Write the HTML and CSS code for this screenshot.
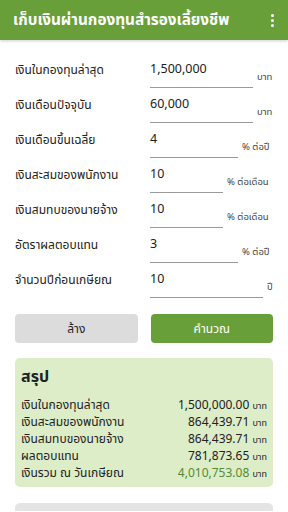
FILE: index.html
```html
<!DOCTYPE html>
<html lang="th">
<head>
  <meta charset="UTF-8">
  <meta name="viewport" content="width=device-width, initial-scale=1.0">
  <title>เก็บเงินผ่านกองทุนสำรองเลี้ยงชีพ</title>
  <link rel="stylesheet" href="styles.css">
</head>
<body>

<header class="appbar">
  <h1>เก็บเงินผ่านกองทุนสำรองเลี้ยงชีพ</h1>
  <span class="menu"><i></i><i></i><i></i></span>
</header>

<main>
  <!-- ฟอร์มกรอกข้อมูล -->
  <div class="form">
    <div class="row">
      <label>เงินในกองทุนล่าสุด</label>
      <div class="field"><span class="val w1">1,500,000</span><span class="unit">บาท</span></div>
    </div>
    <div class="row">
      <label>เงินเดือนปัจจุบัน</label>
      <div class="field"><span class="val w1">60,000</span><span class="unit">บาท</span></div>
    </div>
    <div class="row">
      <label>เงินเดือนขึ้นเฉลี่ย</label>
      <div class="field"><span class="val w2">4</span><span class="unit">% ต่อปี</span></div>
    </div>
    <div class="row">
      <label>เงินสะสมของพนักงาน</label>
      <div class="field"><span class="val w3">10</span><span class="unit">% ต่อเดือน</span></div>
    </div>
    <div class="row">
      <label>เงินสมทบของนายจ้าง</label>
      <div class="field"><span class="val w3">10</span><span class="unit">% ต่อเดือน</span></div>
    </div>
    <div class="row">
      <label>อัตราผลตอบแทน</label>
      <div class="field"><span class="val w2">3</span><span class="unit">% ต่อปี</span></div>
    </div>
    <div class="row">
      <label>จำนวนปีก่อนเกษียณ</label>
      <div class="field"><span class="val w4">10</span><span class="unit">ปี</span></div>
    </div>
  </div>

  <div class="buttons">
    <button class="btn clear">ล้าง</button>
    <button class="btn calc">คำนวณ</button>
  </div>

  <!-- สรุปผล -->
  <div class="summary">
    <h2>สรุป</h2>
    <div class="line"><span>เงินในกองทุนล่าสุด</span><span class="amt">1,500,000.00 <small>บาท</small></span></div>
    <div class="line"><span>เงินสะสมของพนักงาน</span><span class="amt">864,439.71 <small>บาท</small></span></div>
    <div class="line"><span>เงินสมทบของนายจ้าง</span><span class="amt">864,439.71 <small>บาท</small></span></div>
    <div class="line"><span>ผลตอบแทน</span><span class="amt">781,873.65 <small>บาท</small></span></div>
    <div class="line"><span>เงินรวม ณ วันเกษียณ</span><span class="amt"><b>4,010,753.08</b> <small>บาท</small></span></div>
  </div>

  <div class="more"></div>
</main>

</body>
</html>
```

FILE: styles.css
```css
* {
  margin: 0;
  padding: 0;
  box-sizing: border-box;
}
html, body {
  height: 512px;
  overflow: hidden;
}
body {
  font-family: "Noto Sans", "Noto Sans Thai", "Noto Sans Thai UI", sans-serif;
  background-color: #fff;
  color: #222;
  width: 288px;
}
.appbar {
  height: 40px;
  background-color: #689f38;
  display: flex;
  align-items: center;
  justify-content: space-between;
  padding: 0 13px;
  box-shadow: 0 1px 3px rgba(0,0,0,0.2);
}
.appbar h1 {
  color: #fff;
  font-size: 15.3px;
  font-weight: bold;
}
.menu {
  display: flex;
  flex-direction: column;
  gap: 2px;
  margin-right: 1px;
}
.menu i {
  width: 3px;
  height: 3px;
  background: #fff;
  border-radius: 50%;
}
main {
  padding: 14px 15px 0 15px;
}
.row {
  display: flex;
  height: 35px;
}
.row label {
  width: 135px;
  font-size: 12px;
  padding-top: 7px;
}
.field {
  display: flex;
  align-items: flex-start;
}
.val {
  display: block;
  font-size: 12.5px;
  height: 34px;
  padding-top: 6px;
  border-bottom: 1px solid #9a9a9a;
}
.w1 { width: 103px; }
.w2 { width: 88px; }
.w3 { width: 73px; }
.w4 { width: 113px; }
.unit {
  font-size: 9.5px;
  color: #444;
  margin-left: 4px;
  padding-top: 16px;
}
.buttons {
  display: flex;
  gap: 13px;
  margin-top: 15px;
}
.btn {
  flex: 1;
  height: 29px;
  border: none;
  border-radius: 4px;
  font-family: inherit;
  font-size: 12px;
}
.clear {
  background-color: #dcdcdc;
  color: #222;
}
.calc {
  background-color: #689f38;
  color: #fff;
}
.summary {
  margin-top: 15px;
  background-color: #dcedc8;
  border-radius: 5px;
  padding: 7px 6px 6px 6px;
}
.summary h2 {
  font-size: 16px;
  font-weight: bold;
  margin-bottom: 7px;
}
.line {
  display: flex;
  justify-content: space-between;
  font-size: 12px;
  height: 17px;
}
.amt small {
  font-size: 9px;
}
.amt b {
  font-weight: normal;
  color: #558b2f;
}
.more {
  margin-top: 16px;
  height: 8px;
  background-color: #e4e4e4;
  border-radius: 5px 5px 0 0;
}
```
